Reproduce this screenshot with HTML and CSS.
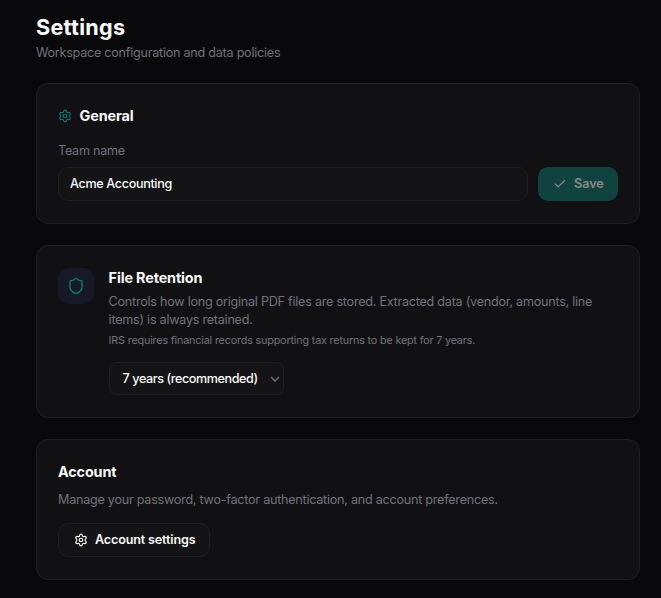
FILE: index.html
```html
<!DOCTYPE html>
<html lang="en">
<head>
<meta charset="utf-8">
<title>Settings</title>
<link rel="stylesheet" href="styles.css">
</head>
<body>
<svg class="defs" aria-hidden="true">
  <symbol id="gear" viewBox="0 0 24 24"><path d="M9.671 4.136a2.34 2.34 0 0 1 4.659 0 2.34 2.34 0 0 0 3.319 1.915 2.34 2.34 0 0 1 2.33 4.033 2.34 2.34 0 0 0 0 3.831 2.34 2.34 0 0 1-2.33 4.033 2.34 2.34 0 0 0-3.319 1.915 2.34 2.34 0 0 1-4.659 0 2.34 2.34 0 0 0-3.32-1.915 2.34 2.34 0 0 1-2.33-4.033 2.34 2.34 0 0 0 0-3.831A2.34 2.34 0 0 1 6.35 6.051a2.34 2.34 0 0 0 3.319-1.915"/><circle cx="12" cy="12" r="3"/></symbol>
</svg>
<main class="page">
  <header class="page-header">
    <h1 class="title">Settings</h1>
    <p class="subtitle">Workspace configuration and data policies</p>
  </header>

  <section class="card general">
    <h2 class="heading with-icon"><svg class="icon accent"><use href="#gear"/></svg><span>General</span></h2>
    <label class="label" for="team">Team name</label>
    <div class="row">
      <input class="input" id="team" type="text" value="Acme Accounting">
      <button class="save" disabled><svg class="icon" viewBox="0 0 24 24"><path d="M20 6 9 17l-5-5"/></svg><span>Save</span></button>
    </div>
  </section>

  <section class="card retention">
    <div class="badge"><svg class="icon shield accent" viewBox="0 0 24 24"><path d="M20 13c0 5-3.5 7.5-7.66 8.95a1 1 0 0 1-.67-.01C7.5 20.5 4 18 4 13V6a1 1 0 0 1 1-1c2 0 4.5-1.2 6.24-2.72a1.17 1.17 0 0 1 1.52 0C14.51 3.81 17 5 19 5a1 1 0 0 1 1 1z"/></svg></div>
    <div class="body">
      <h2 class="heading">File Retention</h2>
      <p class="text desc">Controls how long original PDF files are stored. Extracted data (vendor, amounts, line<br>items) is always retained.</p>
      <p class="note">IRS requires financial records supporting tax returns to be kept for 7 years.</p>
      <button class="select"><span>7 years (recommended)</span><svg class="chevron" viewBox="0 0 10 6"><path d="M1 1l4 4 4-4"/></svg></button>
    </div>
  </section>

  <section class="card account">
    <h2 class="heading">Account</h2>
    <p class="text manage">Manage your password, two-factor authentication, and account preferences.</p>
    <button class="settings"><svg class="icon"><use href="#gear"/></svg><span>Account settings</span></button>
  </section>
</main>
</body>
</html>
```
FILE: styles.css
```css
* { box-sizing: border-box; margin: 0; padding: 0; }
html { background: #09090b; }
body { font-family: Inter, "Liberation Sans", sans-serif; color: #fafafa; font-size: 12.6px; line-height: 18px; letter-spacing: -0.245px; }
.defs { display: none; }
.page { width: 640px; padding: 14px 0 0 36px; }
.page-header { height: 69px; }
.title { font-size: 21.6px; line-height: 27px; font-weight: 700; letter-spacing: 0.27px; }
.subtitle { color: #71717a; margin-top: 3px; }
.card { background: #111113; border: 1px solid #1f1f22; border-radius: 12px; padding: 21px; }
.general { height: 141px; }
.retention { height: 173px; margin-top: 21px; display: flex; gap: 14.6px; }
.account { height: 141px; margin-top: 21px; }
.heading { font-size: 14.4px; line-height: 22px; font-weight: 700; letter-spacing: -0.14px; white-space: nowrap; }
.with-icon { display: flex; align-items: center; gap: 7.6px; }
.icon { width: 14px; height: 14px; flex: none; fill: none; stroke: currentColor; stroke-width: 2; stroke-linecap: round; stroke-linejoin: round; }
.accent { color: #0f766e; }
.label { display: block; margin: 14px 0 7px; line-height: 19px; color: #71717a; }
.row { display: flex; gap: 10px; }
.input { width: 470px; height: 34px; border: 1px solid #1f1f22; border-radius: 10px; background: #141416; color: #fafafa; font: 500 12.6px Inter, sans-serif; letter-spacing: -0.34px; padding: 0 11px 1px; }
button { font: 600 12.6px Inter, sans-serif; letter-spacing: -0.16px; color: #fafafa; display: flex; align-items: center; white-space: nowrap; border: 1px solid #1f1f22; background: #141416; }
.save { width: 80px; height: 34px; border: 0; border-radius: 10px; background: #10433f; color: #8d8987; padding-left: 15px; gap: 7px; letter-spacing: 0; }
.save span, .settings span { margin-bottom: 1px; }
.badge { width: 36px; height: 36px; margin-top: 1px; border-radius: 10px; background: #171927; display: flex; align-items: center; justify-content: center; flex: none; }
.shield { width: 18px; height: 18px; }
.text { color: #71717a; white-space: nowrap; }
.desc { margin-top: 4px; }
.note { font-size: 10.8px; line-height: 16px; color: #71717a; margin-top: 4px; letter-spacing: -0.18px; white-space: nowrap; }
.select { width: 175px; height: 33px; margin-top: 13px; border-radius: 7px; padding: 0 3px 0 13px; justify-content: space-between; font-weight: 500; letter-spacing: -0.42px; }
.chevron { width: 10px; height: 6px; fill: none; stroke: #71717a; stroke-width: 1.4; }
.manage { margin-top: 8px; }
.settings { width: 152px; height: 34px; margin-top: 14px; border-radius: 10px; padding-left: 15px; gap: 7px; }
```
